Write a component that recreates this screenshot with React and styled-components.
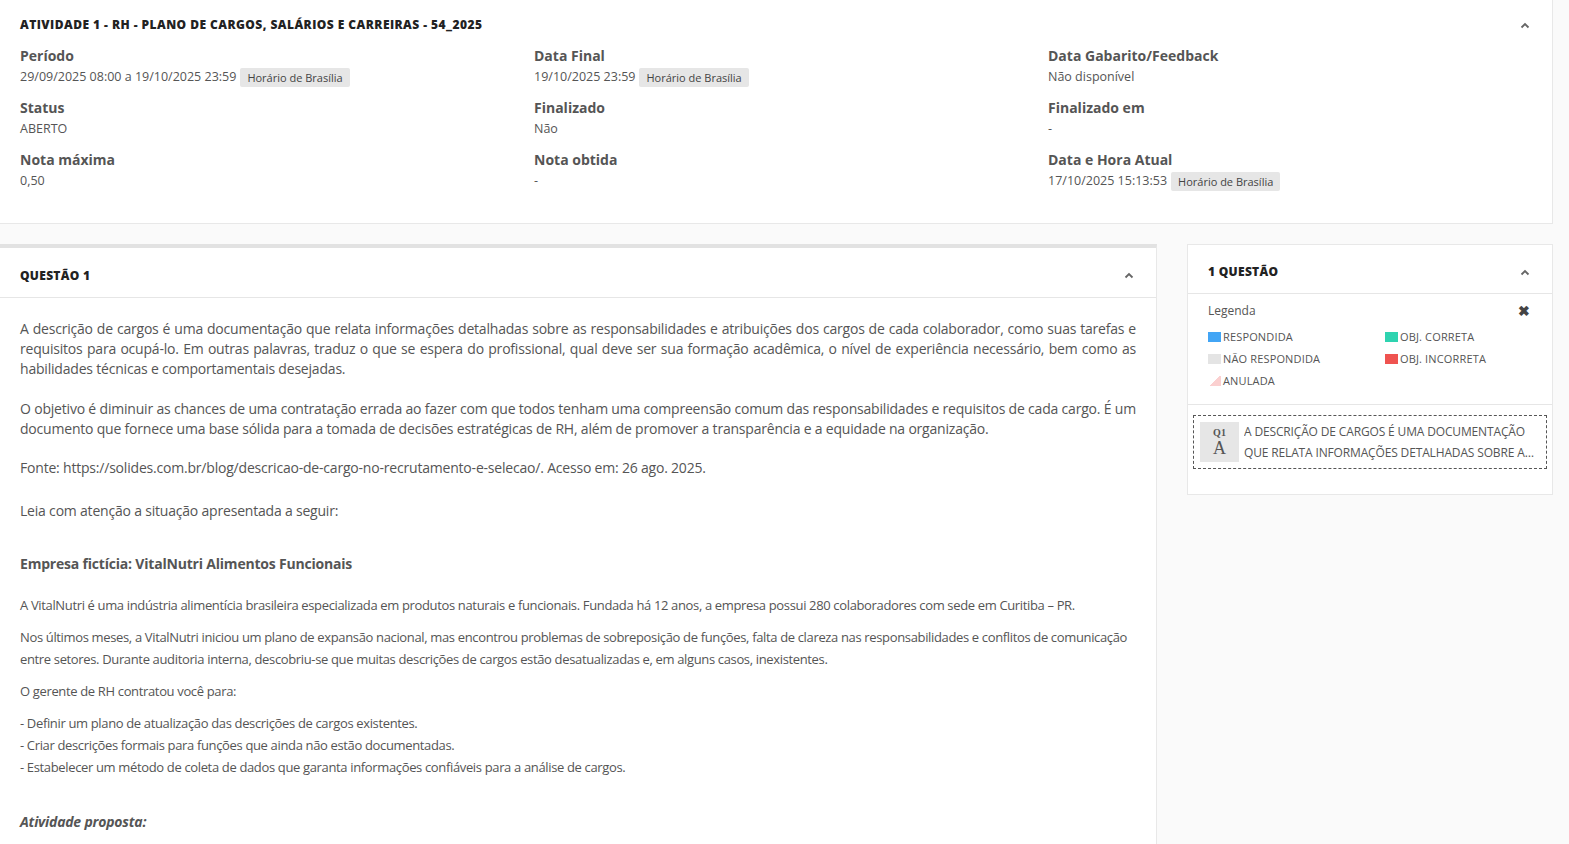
import React from 'react'
import styled, { createGlobalStyle } from 'styled-components'

const GlobalStyle = createGlobalStyle`
  html, body {
    margin: 0;
    padding: 0;
    background: #fafafa;
    font-family: "Open Sans", "Noto Sans", sans-serif;
    color: #555;
  }
  * { box-sizing: border-box; }
`

const Page = styled.div`
  display: flex;
  flex-direction: column;
  min-height: 844px;
`

const InfoCard = styled.section`
  width: 1553px;
  background: #fff;
  border-right: 1px solid #e8e8e8;
  border-bottom: 1px solid #e8e8e8;
  padding: 15px 0 31px 0;
`

const CardHeader = styled.div`
  display: flex;
  align-items: center;
  justify-content: space-between;
  padding: ${p => (p.$line ? 6 : 0)}px 22px 0 20px;
  height: ${p => p.$h || 20}px;
  border-bottom: ${p => (p.$line ? '1px solid #e6e6e6' : 'none')};
`

const Heading = styled.h2`
  margin: 0;
  font-family: "Open Sans", sans-serif;
  font-weight: 800;
  font-size: 12px;
  line-height: 20px;
  color: #222;
  letter-spacing: ${p => p.$spacing || 0.1}px;
`

const Chevron = styled.svg`
  width: 10px;
  height: 7px;
  flex: none;
`

const InfoGrid = styled.div`
  display: grid;
  grid-template-columns: 514px 514px 1fr;
  row-gap: 10px;
  padding-left: 20px;
  margin-top: 11px;
`

const Field = styled.div`
  display: flex;
  flex-direction: column;
`

const Label = styled.div`
  font-weight: 700;
  font-size: 14px;
  line-height: 20px;
  color: #555;
`

const Value = styled.div`
  display: flex;
  align-items: center;
  font-size: 12.5px;
  line-height: 22px;
  color: #555;
`

const Badge = styled.span`
  margin-left: 4px;
  padding: 0 7px;
  height: 19px;
  line-height: 19px;
  background: #e6e6e6;
  border-radius: 2px;
  font-size: 11px;
  color: #444;
`

const Main = styled.div`
  display: flex;
  align-items: flex-start;
  margin-top: 20px;
  flex: 1;
`

const QuestionPanel = styled.section`
  width: 1157px;
  min-height: 600px;
  background: #fff;
  border-top: 4px solid #e2e2e2;
  border-right: 1px solid #e8e8e8;
`

const QuestionBody = styled.div`
  padding: 21px 20px 0 20px;
`

const Text = styled.p`
  margin: ${p => p.$mt || 0}px 0 0 0;
  font-size: ${p => (p.$compact ? 13 : 14)}px;
  line-height: ${p => (p.$compact ? 22 : 20)}px;
  text-align: ${p => (p.$justify ? 'justify' : 'left')};
  font-weight: ${p => (p.$bold ? 700 : 400)};
  font-style: ${p => (p.$italic ? 'italic' : 'normal')};
  color: #555;
  letter-spacing: ${p => (p.$compact ? '-0.35px' : '-0.2px')};
`

const SidePanel = styled.aside`
  width: 366px;
  margin-left: 30px;
  background: #fff;
  border: 1px solid #e8e8e8;
  padding-bottom: 25px;
`

const LegendBox = styled.div`
  padding: 7px 22px 12px 20px;
  border-bottom: 1px solid #e6e6e6;
`

const LegendTop = styled.div`
  display: flex;
  justify-content: space-between;
  align-items: center;
  font-size: 12px;
  line-height: 20px;
  color: #555;
  margin-bottom: 5px;
`

const CloseMark = styled.span`
  font-size: 14px;
  font-weight: 700;
  color: #444;
`

const LegendGrid = styled.div`
  display: grid;
  grid-template-columns: 177px 1fr;
`

const LegendItem = styled.div`
  display: flex;
  align-items: center;
  font-size: 11px;
  line-height: 22px;
  color: #555;
  text-transform: uppercase;
  letter-spacing: 0.15px;
`

const Swatch = styled.span`
  width: 13px;
  height: 10px;
  margin-right: 2px;
  background: ${p => p.$color};
`

const QuestionLink = styled.div`
  display: flex;
  align-items: center;
  gap: 5px;
  margin: 10px 5px 0 5px;
  padding: 5px 6px;
  border: 1px dashed #555;
`

const QTag = styled.div`
  flex: none;
  width: 39px;
  height: 40px;
  background: #e6e6e6;
  display: flex;
  flex-direction: column;
  align-items: center;
  justify-content: center;
  color: #555;
`

const QNum = styled.span`
  font-family: "Liberation Serif", serif;
  font-weight: 700;
  font-size: 10px;
  line-height: 12px;
`

const QLetter = styled.span`
  font-family: "Liberation Serif", serif;
  font-size: 18px;
  line-height: 18px;
`

const QText = styled.div`
  font-size: 12px;
  line-height: 21px;
  color: #555;
  text-transform: uppercase;
  letter-spacing: -0.15px;
  display: -webkit-box;
  -webkit-line-clamp: 2;
  -webkit-box-orient: vertical;
  overflow: hidden;
`

const Up = () => (
  <Chevron viewBox="0 0 10 7">
    <path d="M1.5 5.5 L5 2 L8.5 5.5" fill="none" stroke="#666" strokeWidth="1.8" />
  </Chevron>
)

const fields = [
  { label: 'Período', value: '29/09/2025 08:00 a 19/10/2025 23:59', badge: true },
  { label: 'Data Final', value: '19/10/2025 23:59', badge: true },
  { label: 'Data Gabarito/Feedback', value: 'Não disponível' },
  { label: 'Status', value: 'ABERTO' },
  { label: 'Finalizado', value: 'Não' },
  { label: 'Finalizado em', value: '-' },
  { label: 'Nota máxima', value: '0,50' },
  { label: 'Nota obtida', value: '-' },
  { label: 'Data e Hora Atual', value: '17/10/2025 15:13:53', badge: true },
]

const legend = [
  { name: 'Respondida', color: '#42a5f5' },
  { name: 'Obj. correta', color: '#2ed3b0' },
  { name: 'Não respondida', color: '#e4e4e4' },
  { name: 'Obj. incorreta', color: '#ef5350' },
  { name: 'Anulada', color: 'linear-gradient(135deg, #fff 50%, #fbd0d0 50%)' },
]

const App = () => {
  return (
    <Page>
      <GlobalStyle />
      <InfoCard>
        <CardHeader>
          <Heading $spacing={0.45}>ATIVIDADE 1 - RH - PLANO DE CARGOS, SALÁRIOS E CARREIRAS - 54_2025</Heading>
          <Up />
        </CardHeader>
        <InfoGrid>
          {fields.map(f => (
            <Field key={f.label}>
              <Label>{f.label}</Label>
              <Value>
                {f.value}
                {f.badge && <Badge>Horário de Brasília</Badge>}
              </Value>
            </Field>
          ))}
        </InfoGrid>
      </InfoCard>

      <Main>
        <QuestionPanel>
          <CardHeader $h={50} $line>
            <Heading $spacing={0.3}>QUESTÃO 1</Heading>
            <Up />
          </CardHeader>
          <QuestionBody>
            <Text $justify>
              A descrição de cargos é uma documentação que relata informações detalhadas sobre as responsabilidades e atribuições dos cargos de cada colaborador, como suas tarefas e requisitos para ocupá-lo. Em outras palavras, traduz o que se espera do profissional, qual deve ser sua formação acadêmica, o nível de experiência necessário, bem como as habilidades técnicas e comportamentais desejadas.
            </Text>
            <Text $justify $mt={20}>
              O objetivo é diminuir as chances de uma contratação errada ao fazer com que todos tenham uma compreensão comum das responsabilidades e requisitos de cada cargo. É um documento que fornece uma base sólida para a tomada de decisões estratégicas de RH, além de promover a transparência e a equidade na organização.
            </Text>
            <Text $mt={19}>
              Fonte: https://solides.com.br/blog/descricao-de-cargo-no-recrutamento-e-selecao/. Acesso em: 26 ago. 2025.
            </Text>
            <Text $mt={23}>Leia com atenção a situação apresentada a seguir:</Text>
            <Text $mt={33} $bold>Empresa fictícia: VitalNutri Alimentos Funcionais</Text>
            <Text $mt={20} $compact>
              A VitalNutri é uma indústria alimentícia brasileira especializada em produtos naturais e funcionais. Fundada há 12 anos, a empresa possui 280 colaboradores com sede em Curitiba – PR.
            </Text>
            <Text $mt={10} $compact>
              Nos últimos meses, a VitalNutri iniciou um plano de expansão nacional, mas encontrou problemas de sobreposição de funções, falta de clareza nas responsabilidades e conflitos de comunicação entre setores. Durante auditoria interna, descobriu-se que muitas descrições de cargos estão desatualizadas e, em alguns casos, inexistentes.
            </Text>
            <Text $mt={10} $compact>O gerente de RH contratou você para:</Text>
            <Text $mt={10} $compact>
              - Definir um plano de atualização das descrições de cargos existentes.<br />
              - Criar descrições formais para funções que ainda não estão documentadas.<br />
              - Estabelecer um método de coleta de dados que garanta informações confiáveis para a análise de cargos.
            </Text>
            <Text $mt={34} $bold $italic>Atividade proposta:</Text>
          </QuestionBody>
        </QuestionPanel>

        <SidePanel>
          <CardHeader $h={49} $line>
            <Heading $spacing={0.3}>1 QUESTÃO</Heading>
            <Up />
          </CardHeader>
          <LegendBox>
            <LegendTop>
              Legenda
              <CloseMark>✖</CloseMark>
            </LegendTop>
            <LegendGrid>
              {legend.map(l => (
                <LegendItem key={l.name}>
                  <Swatch $color={l.color} />
                  {l.name}
                </LegendItem>
              ))}
            </LegendGrid>
          </LegendBox>
          <QuestionLink>
            <QTag>
              <QNum>Q1</QNum>
              <QLetter>A</QLetter>
            </QTag>
            <QText>
              A descrição de cargos é uma documentação que relata informações detalhadas sobre as responsabilidades e atribuições dos cargos
            </QText>
          </QuestionLink>
        </SidePanel>
      </Main>
    </Page>
  )
}

export default App
